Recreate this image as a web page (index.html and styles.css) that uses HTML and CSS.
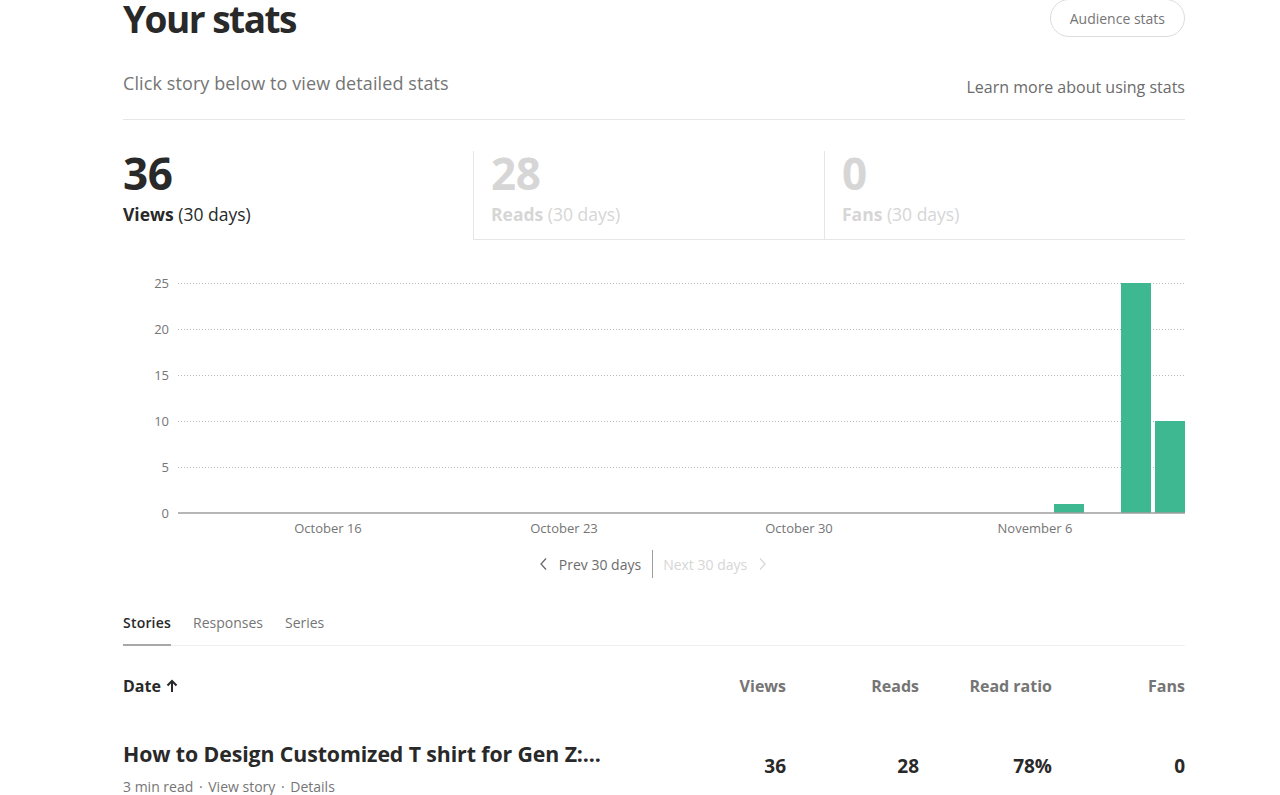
FILE: index.html
```html
<!DOCTYPE html>
<html>
<head>
<meta charset="utf-8">
<link rel="stylesheet" href="styles.css">
</head>
<body>
<main class="page">
  <header class="head">
    <div class="head-left">
      <h1 class="title">Your stats</h1>
      <p class="subtitle">Click story below to view detailed stats</p>
    </div>
    <div class="head-right">
      <button class="pill">Audience stats</button>
      <a class="learn">Learn more about using stats</a>
    </div>
  </header>

  <section class="totals">
    <div class="total active">
      <div class="num">36</div>
      <div class="lbl"><b>Views</b> (30 days)</div>
    </div>
    <div class="total muted">
      <div class="num">28</div>
      <div class="lbl"><b>Reads</b> (30 days)</div>
    </div>
    <div class="total muted last">
      <div class="num">0</div>
      <div class="lbl"><b>Fans</b> (30 days)</div>
    </div>
  </section>

  <section class="chart">
    <svg class="chart-svg" width="1062" height="270" viewBox="0 0 1062 270">
      <g class="grid">
        <line x1="55" y1="13.5" x2="1062" y2="13.5"/>
        <line x1="55" y1="59.5" x2="1062" y2="59.5"/>
        <line x1="55" y1="105.5" x2="1062" y2="105.5"/>
        <line x1="55" y1="151.5" x2="1062" y2="151.5"/>
        <line x1="55" y1="197.5" x2="1062" y2="197.5"/>
      </g>
      <g class="ylab">
        <text x="46" y="18">25</text>
        <text x="46" y="64">20</text>
        <text x="46" y="110">15</text>
        <text x="46" y="156">10</text>
        <text x="46" y="202">5</text>
        <text x="46" y="248">0</text>
      </g>
      <g class="bars">
        <rect x="931" y="234" width="30" height="9"/>
        <rect x="998" y="13" width="30" height="230"/>
        <rect x="1032" y="151" width="30" height="92"/>
      </g>
      <line class="base" x1="55" y1="243" x2="1062" y2="243"/>
      <g class="xlab">
        <text x="205" y="263">October 16</text>
        <text x="441" y="263">October 23</text>
        <text x="676" y="263">October 30</text>
        <text x="912" y="263">November 6</text>
      </g>
    </svg>
  </section>

  <nav class="pager">
    <span class="pg prev">
      <svg width="10" height="14" viewBox="0 0 10 14"><path d="M7 1.5 L2 7 L7 12.5" fill="none" stroke="currentColor" stroke-width="1.3"/></svg>
      Prev 30 days
    </span>
    <span class="divider"></span>
    <span class="pg next">
      Next 30 days
      <svg width="10" height="14" viewBox="0 0 10 14"><path d="M3 1.5 L8 7 L3 12.5" fill="none" stroke="currentColor" stroke-width="1.3"/></svg>
    </span>
  </nav>

  <nav class="tabs">
    <span class="tab current">Stories</span>
    <span class="tab">Responses</span>
    <span class="tab">Series</span>
  </nav>

  <div class="table">
    <div class="row thead">
      <div class="c-title date">Date <svg width="12" height="14" viewBox="0 0 12 14"><path d="M6 13 V2 M1.5 6.5 L6 2 L10.5 6.5" fill="none" stroke="currentColor" stroke-width="2"/></svg></div>
      <div class="c-num">Views</div>
      <div class="c-num">Reads</div>
      <div class="c-num">Read ratio</div>
      <div class="c-num">Fans</div>
    </div>
    <div class="row story">
      <div class="c-title">
        <div class="story-title">How to Design Customized T shirt for Gen Z:...</div>
        <div class="meta">3 min read <span class="dot">·</span> View story <span class="dot">·</span> Details</div>
      </div>
      <div class="c-num val">36</div>
      <div class="c-num val">28</div>
      <div class="c-num val">78%</div>
      <div class="c-num val">0</div>
    </div>
  </div>
</main>
</body>
</html>
```

FILE: styles.css
```css
* { box-sizing: border-box; }
html, body { margin: 0; padding: 0; background: #fff; }
body {
  font-family: "Open Sans", "Noto Sans", "Liberation Sans", sans-serif;
  color: #292929;
  overflow: hidden;
}
.page {
  width: 1062px;
  margin-left: 123px;
}
.head {
  display: flex;
  justify-content: space-between;
  align-items: flex-start;
  border-bottom: 1px solid #e6e6e6;
  height: 120px;
}
.title {
  margin: 0;
  font-size: 37px;
  font-weight: 700;
  line-height: 38px;
  color: #292929;
  letter-spacing: -1.5px;
}
.subtitle {
  margin: 33px 0 0;
  font-size: 18px;
  line-height: 24px;
  color: #757575;
  letter-spacing: 0.1px;
}
.head-right {
  display: flex;
  flex-direction: column;
  align-items: flex-end;
}
.pill {
  font-family: inherit;
  font-size: 14px;
  color: #757575;
  background: #fff;
  border: 1px solid #dcdcdc;
  border-radius: 20px;
  height: 38px;
  padding: 0 19px;
  margin-top: -1px;
}
.learn {
  margin-top: 39px;
  font-size: 16px;
  color: #6b6b6b;
  line-height: 22px;
}
.totals {
  display: flex;
  margin-top: 31px;
  height: 89px;
}
.total.active { width: 350px; }
.total.muted {
  width: 351px;
  border-left: 1px solid #e6e6e6;
  border-bottom: 1px solid #e6e6e6;
  padding-left: 17px;
}
.total.last { flex: 1; }
.num {
  font-size: 44px;
  font-weight: 700;
  line-height: 44px;
  letter-spacing: -0.5px;
}
.lbl {
  font-size: 17.5px;
  line-height: 24px;
  margin-top: 7px;
}
.total.muted .lbl, .total.muted .num { color: #d6d6d6; }
.chart {
  margin-top: 30px;
  height: 270px;
}
.chart-svg { display: block; }
.grid line { stroke: #b8b8b8; stroke-width: 1; stroke-dasharray: 1 2; }
.base { stroke: #9e9e9e; stroke-width: 1.5; }
.bars rect { fill: #3db891; }
.ylab text {
  font-family: "Open Sans", sans-serif;
  font-size: 13px;
  fill: #757575;
  text-anchor: end;
}
.xlab text {
  font-family: "Open Sans", sans-serif;
  font-size: 13px;
  fill: #757575;
  text-anchor: middle;
}
.pager {
  display: flex;
  justify-content: center;
  align-items: center;
  margin-top: 10px;
  height: 28px;
  font-size: 14px;
  padding-right: 2px;
}
.pg { display: flex; align-items: center; gap: 10px; }
.prev { color: #6b6b6b; }
.next { color: #d6d6d6; }
.divider {
  width: 1px;
  height: 28px;
  background: #9e9e9e;
  margin: 0 10px 0 11px;
}
.tabs {
  display: flex;
  gap: 22px;
  margin-top: 36px;
  border-bottom: 1px solid #f0f0f0;
  height: 32px;
  font-size: 14px;
}
.tab {
  color: #757575;
  line-height: 18px;
}
.tab.current {
  color: #292929;
  font-weight: 600;
  border-bottom: 2px solid #a8a8a8;
  height: 32px;
  letter-spacing: 0.2px;
}
.table { margin-top: 28px; }
.row {
  display: grid;
  grid-template-columns: 1fr 133px 133px 133px 133px;
  align-items: center;
}
.thead {
  font-size: 16px;
  font-weight: 700;
  color: #757575;
  height: 24px;
}
.date {
  color: #292929;
  display: flex;
  align-items: center;
  gap: 5px;
}
.c-num { text-align: right; }
.story { margin-top: 41px; }
.story-title {
  font-size: 21.3px;
  font-weight: 700;
  line-height: 30px;
  color: #292929;
  letter-spacing: -0.1px;
  white-space: nowrap;
}
.meta {
  font-size: 14px;
  color: #757575;
  margin-top: 8px;
  line-height: 20px;
}
.dot { margin: 0 2px; }
.val {
  font-size: 19px;
  font-weight: 700;
  color: #292929;
  padding-bottom: 4px;
}
```
